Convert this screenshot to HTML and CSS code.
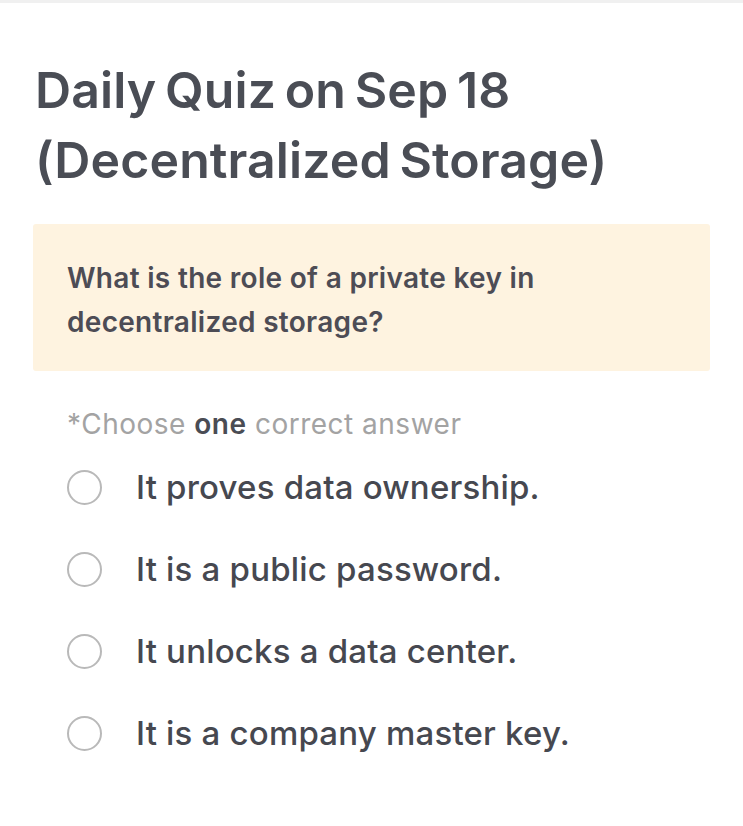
FILE: index.html
```html
<!DOCTYPE html>
<html lang="en">
<head>
    <meta charset="UTF-8">
    <meta name="viewport" content="width=device-width, initial-scale=1.0">
    <title>Daily Quiz</title>
    <link rel="stylesheet" href="styles.css">
</head>
<body>
    <div class="top-bar"></div>

    <div class="quiz">
        <h1 class="quiz-title">Daily Quiz on Sep 18 (Decentralized Storage)</h1>

        <div class="question-box">
            What is the role of a private key in decentralized storage?
        </div>

        <p class="hint">*Choose <strong>one</strong> correct answer</p>

        <ul class="options">
            <li class="option"><span class="radio"></span>It proves data ownership.</li>
            <li class="option"><span class="radio"></span>It is a public password.</li>
            <li class="option"><span class="radio"></span>It unlocks a data center.</li>
            <li class="option"><span class="radio"></span>It is a company master key.</li>
        </ul>
    </div>
</body>
</html>
```

FILE: styles.css
```css
body {
    font-family: Inter, 'Noto Sans', sans-serif;
    margin: 0;
    padding: 0;
    background: #ffffff;
    color: #4a4c54;
}

.top-bar {
    height: 3px;
    background: #f0f0f0;
}

.quiz {
    padding: 52px 33px 40px 33px;
}

.quiz-title {
    font-size: 50px;
    font-weight: 600;
    line-height: 70px;
    letter-spacing: 0.1px;
    word-spacing: -4px;
    margin: 0 0 0 2px;
    color: #4a4d55;
}

.question-box {
    margin-top: 29px;
    background: #fef3e0;
    border-radius: 3px;
    padding: 32px 34px 27px 34px;
    font-size: 28px;
    font-weight: 600;
    line-height: 44px;
    letter-spacing: 0.3px;
    color: #4d4c55;
}

.hint {
    margin: 36px 0 0 34px;
    font-size: 28px;
    letter-spacing: 0.5px;
    color: #a3a3a3;
}

.hint strong {
    font-weight: 600;
    color: #4a4c54;
}

.options {
    list-style: none;
    margin: 5px 0 0 34px;
    padding: 0;
}

.option {
    display: flex;
    align-items: center;
    height: 82px;
    font-size: 33px;
    font-weight: 500;
    letter-spacing: 0.2px;
    color: #464850;
}

.radio {
    width: 31px;
    height: 31px;
    border: 2px solid #b9b9b9;
    border-radius: 50%;
    margin-right: 34px;
    flex-shrink: 0;
}
```
